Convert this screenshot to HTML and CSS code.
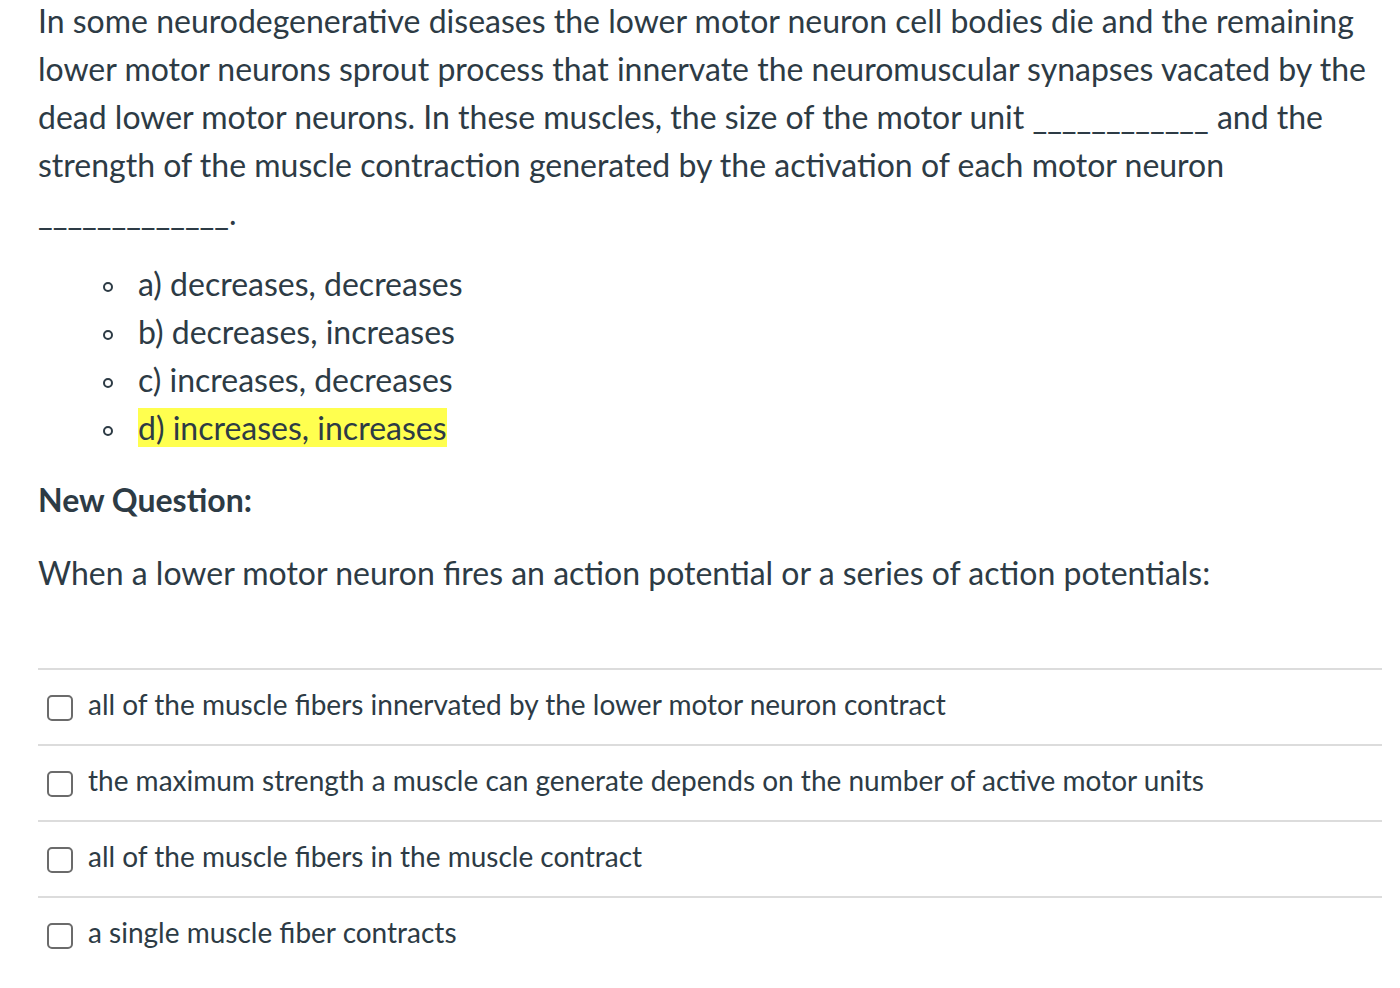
FILE: index.html
```html
<!DOCTYPE html>
<html>
<head>
<meta charset="utf-8">
<link rel="stylesheet" href="styles.css">
</head>
<body>
<div class="page">
  <p class="question">In some neurodegenerative diseases the lower motor neuron cell bodies die and the remaining lower motor neurons sprout process that innervate the neuromuscular synapses vacated by the dead lower motor neurons. In these muscles, the size of the motor unit ____________ and the strength of the muscle contraction generated by the activation of each motor neuron _____________.</p>
  <ul class="options">
    <li>a) decreases, decreases</li>
    <li>b) decreases, increases</li>
    <li>c) increases, decreases</li>
    <li><span class="hl">d) increases, increases</span></li>
  </ul>
  <p class="heading">New Question:</p>
  <p class="question">When a lower motor neuron fires an action potential or a series of action potentials:</p>
  <div class="answers">
    <div class="answer"><span class="box"></span><span class="label">all of the muscle fibers innervated by the lower motor neuron contract</span></div>
    <div class="answer"><span class="box"></span><span class="label">the maximum strength a muscle can generate depends on the number of active motor units</span></div>
    <div class="answer"><span class="box"></span><span class="label">all of the muscle fibers in the muscle contract</span></div>
    <div class="answer"><span class="box"></span><span class="label">a single muscle fiber contracts</span></div>
  </div>
</div>
</body>
</html>
```
FILE: styles.css
```css
html, body {
  margin: 0;
  padding: 0;
  background: #ffffff;
}
body {
  font-family: Lato, "Open Sans", sans-serif;
  color: #2d3b45;
}
.page {
  width: 1344px;
  padding: 0 18px 0 38px;
}
.question {
  font-size: 32px;
  line-height: 48px;
  margin: -3px 0 0 0;
}
.options {
  list-style: none;
  margin: 23px 0 0 0;
  padding-left: 65px;
  font-size: 32px;
  line-height: 48px;
}
.options li::before {
  content: "";
  display: inline-block;
  vertical-align: middle;
  width: 6px;
  height: 6px;
  border: 2px solid #2d3b45;
  border-radius: 50%;
  margin-right: 25px;
  margin-top: -2px;
}
.hl {
  background: #ffff4f;
}
.heading {
  font-size: 32px;
  line-height: 48px;
  font-weight: bold;
  margin: 24px 0 28px 0;
}
.answers {
  margin-top: 71px;
}
.answer {
  display: flex;
  align-items: center;
  gap: 15px;
  height: 74px;
  border-top: 2px solid #dcdcdc;
  padding-left: 9px;
  font-size: 28px;
}
.label {
  margin-bottom: 6px;
}
.box {
  width: 22px;
  height: 22px;
  border: 2px solid #6b6b6b;
  border-radius: 5px;
  flex: none;
  margin-top: 1px;
}
```
